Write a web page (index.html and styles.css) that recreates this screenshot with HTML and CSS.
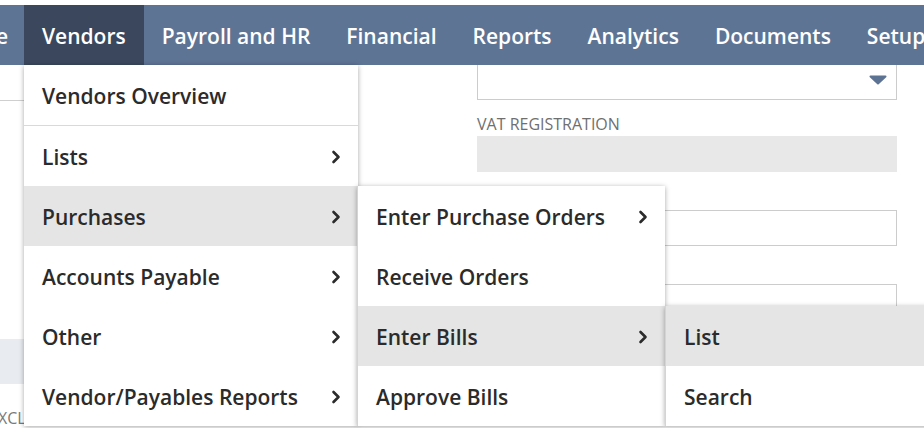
FILE: index.html
```html
<!DOCTYPE html>
<html lang="en">
<head>
<meta charset="utf-8">
<title>Vendors menu</title>
<link rel="stylesheet" href="styles.css">
</head>
<body>
<div class="top-gap"></div>
<nav class="navbar">
  <div class="nav-item nav-cut"><span>Home</span></div>
  <div class="nav-item active">Vendors</div>
  <div class="nav-item">Payroll and HR</div>
  <div class="nav-item">Financial</div>
  <div class="nav-item">Reports</div>
  <div class="nav-item">Analytics</div>
  <div class="nav-item">Documents</div>
  <div class="nav-item">Setup</div>
</nav>

<main class="content">
  <section class="left-col">
    <div class="left-top"></div>
    <div class="left-band"></div>
    <div class="left-label">EXCLUDE</div>
  </section>
  <section class="right-col">
    <div class="select-box">
      <svg class="select-caret" width="18" height="10" viewBox="0 0 18 10"><path d="M1.5 1.5 H16.5 L9 8.5 Z" fill="#5d7394" stroke="#5d7394" stroke-width="2" stroke-linejoin="round"/></svg>
    </div>
    <div class="field-group">
      <div class="field-label">VAT REGISTRATION</div>
      <div class="field readonly"></div>
    </div>
    <div class="field-group">
      <div class="field-label"></div>
      <div class="field"></div>
    </div>
    <div class="field-group">
      <div class="field-label"></div>
      <div class="field"></div>
    </div>
  </section>

  <ul class="menu menu-main">
    <li class="menu-row first">Vendors Overview</li>
    <li class="menu-row">Lists<svg class="chev" width="10" height="14" viewBox="0 0 10 14"><path d="M2.5 2 L7.5 7 L2.5 12" fill="none" stroke="#2b2b2b" stroke-width="2.6" stroke-linecap="round" stroke-linejoin="round"/></svg></li>
    <li class="menu-row hover">Purchases<svg class="chev" width="10" height="14" viewBox="0 0 10 14"><path d="M2.5 2 L7.5 7 L2.5 12" fill="none" stroke="#2b2b2b" stroke-width="2.6" stroke-linecap="round" stroke-linejoin="round"/></svg></li>
    <li class="menu-row">Accounts Payable<svg class="chev" width="10" height="14" viewBox="0 0 10 14"><path d="M2.5 2 L7.5 7 L2.5 12" fill="none" stroke="#2b2b2b" stroke-width="2.6" stroke-linecap="round" stroke-linejoin="round"/></svg></li>
    <li class="menu-row">Other<svg class="chev" width="10" height="14" viewBox="0 0 10 14"><path d="M2.5 2 L7.5 7 L2.5 12" fill="none" stroke="#2b2b2b" stroke-width="2.6" stroke-linecap="round" stroke-linejoin="round"/></svg></li>
    <li class="menu-row">Vendor/Payables Reports<svg class="chev" width="10" height="14" viewBox="0 0 10 14"><path d="M2.5 2 L7.5 7 L2.5 12" fill="none" stroke="#2b2b2b" stroke-width="2.6" stroke-linecap="round" stroke-linejoin="round"/></svg></li>
  </ul>

  <ul class="menu menu-sub1">
    <li class="menu-row">Enter Purchase Orders<svg class="chev" width="10" height="14" viewBox="0 0 10 14"><path d="M2.5 2 L7.5 7 L2.5 12" fill="none" stroke="#2b2b2b" stroke-width="2.6" stroke-linecap="round" stroke-linejoin="round"/></svg></li>
    <li class="menu-row">Receive Orders</li>
    <li class="menu-row hover">Enter Bills<svg class="chev" width="10" height="14" viewBox="0 0 10 14"><path d="M2.5 2 L7.5 7 L2.5 12" fill="none" stroke="#2b2b2b" stroke-width="2.6" stroke-linecap="round" stroke-linejoin="round"/></svg></li>
    <li class="menu-row">Approve Bills</li>
  </ul>

  <ul class="menu menu-sub2">
    <li class="menu-row hover">List</li>
    <li class="menu-row">Search</li>
  </ul>
</main>
</body>
</html>
```

FILE: styles.css
```css
* { box-sizing: border-box; }

html, body {
  margin: 0;
  padding: 0;
  background: #ffffff;
  font-family: "Open Sans", "Noto Sans", sans-serif;
  overflow: hidden;
  width: 924px;
  height: 428px;
}

.top-gap {
  height: 5px;
  background: #ffffff;
}

.navbar {
  position: relative;
  z-index: 2;
  display: flex;
  height: 60px;
  background: #5e7495;
  color: #ffffff;
  font-size: 21px;
  font-weight: 600;
  white-space: nowrap;
  overflow: hidden;
}

.nav-item {
  display: flex;
  align-items: center;
  padding: 1px 18px 0;
  flex: none;
}

.nav-item.active {
  background: #3a475d;
}

.nav-cut {
  width: 24px;
  padding: 1px 16px 0 0;
  justify-content: flex-end;
  overflow: hidden;
}

.content {
  position: relative;
  display: grid;
  grid-template-columns: 330px 420px;
  column-gap: 147px;
}

/* background page (left column, mostly covered) */
.left-col {
  display: flex;
  flex-direction: column;
}

.left-top {
  height: 36px;
  border-bottom: 1px solid #cfcfcf;
}

.left-band {
  margin-top: 238px;
  height: 45px;
  background: #e8ebf0;
}

.left-label {
  margin-top: 24px;
  margin-left: -11px;
  font-size: 16px;
  line-height: 20px;
  color: #7a7a7a;
  white-space: nowrap;
}

/* background page (right column form) */
.right-col {
  display: flex;
  flex-direction: column;
}

.select-box {
  margin-top: -6px;
  height: 41px;
  border: 1px solid #cccccc;
  display: flex;
  align-items: center;
  justify-content: flex-end;
  padding-right: 9px;
}

.select-caret {
  display: block;
}

.field-group {
  margin-top: 14px;
  display: flex;
  flex-direction: column;
  gap: 2px;
}

.field-group + .field-group {
  margin-top: 16px;
}

.field-label {
  height: 20px;
  font-size: 16px;
  line-height: 20px;
  color: #6f6f6f;
  white-space: nowrap;
}

.field {
  height: 36px;
  border: 1px solid #cccccc;
}

.field.readonly {
  border: none;
  background: #e8e8e8;
}

/* dropdown menus (overlay) */
.menu {
  position: absolute;
  z-index: 3;
  margin: 0;
  padding: 0;
  list-style: none;
  background: #ffffff;
  box-shadow: 0 1px 5px rgba(0, 0, 0, 0.35);
  color: #2b2b2b;
  font-size: 21px;
  font-weight: 600;
}

.menu-main {
  left: 24px;
  top: 0;
  width: 334px;
}

.menu-sub1 {
  left: 357px;
  top: 121px;
  width: 308px;
  border-left: 1px solid #d4d4d4;
}

.menu-sub2 {
  left: 665px;
  top: 241px;
  width: 280px;
  border-left: 1px solid #d4d4d4;
}

.menu-row {
  display: flex;
  align-items: center;
  justify-content: space-between;
  height: 60px;
  padding: 2px 17px 0 18px;
  white-space: nowrap;
}

.menu-row.first {
  height: 61px;
  border-bottom: 1px solid #d9d9d9;
}

.menu-row.hover {
  background: #e5e5e5;
}

.chev {
  display: block;
  flex: none;
}
```
